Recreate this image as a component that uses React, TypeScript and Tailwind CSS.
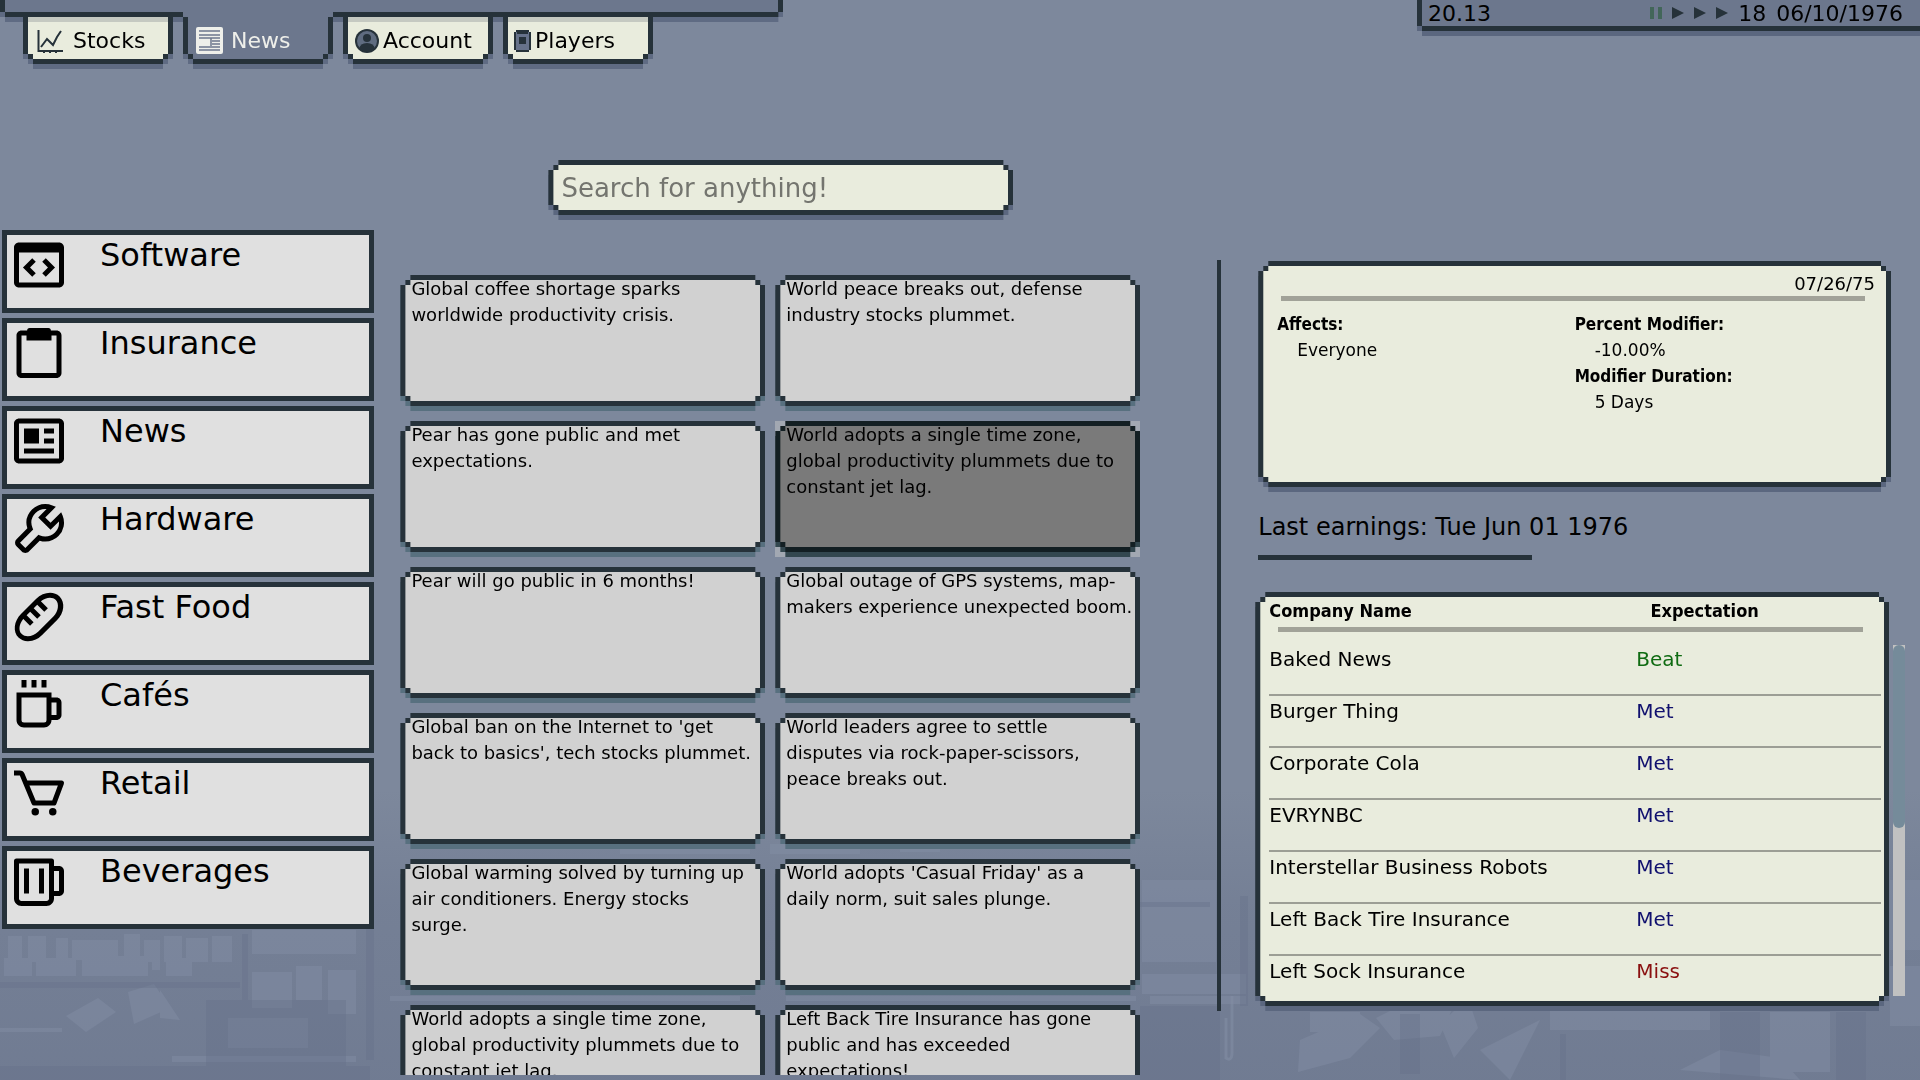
import React, { useState } from 'react';
import { BiBaguette, BiBeer, BiCart, BiClipboard, BiCodeBlock, BiCoffee, BiNews, BiWrench } from 'react-icons/bi';

// Stepped 5px corners, for the dark outline and the fill inside it
const OUTLINE =
  '[clip-path:polygon(10px_0,calc(100%_-_10px)_0,calc(100%_-_10px)_5px,calc(100%_-_5px)_5px,calc(100%_-_5px)_10px,100%_10px,100%_calc(100%_-_10px),calc(100%_-_5px)_calc(100%_-_10px),calc(100%_-_5px)_calc(100%_-_5px),calc(100%_-_10px)_calc(100%_-_5px),calc(100%_-_10px)_100%,10px_100%,10px_calc(100%_-_5px),5px_calc(100%_-_5px),5px_calc(100%_-_10px),0_calc(100%_-_10px),0_10px,5px_10px,5px_5px,10px_5px)]';
const FILL =
  '[clip-path:polygon(5px_0,calc(100%_-_5px)_0,calc(100%_-_5px)_5px,100%_5px,100%_calc(100%_-_5px),calc(100%_-_5px)_calc(100%_-_5px),calc(100%_-_5px)_100%,5px_100%,5px_calc(100%_-_5px),0_calc(100%_-_5px),0_5px,5px_5px)]';
const TAB_OUTLINE =
  '[clip-path:polygon(0_0,100%_0,100%_calc(100%_-_10px),calc(100%_-_5px)_calc(100%_-_10px),calc(100%_-_5px)_calc(100%_-_5px),calc(100%_-_10px)_calc(100%_-_5px),calc(100%_-_10px)_100%,10px_100%,10px_calc(100%_-_5px),5px_calc(100%_-_5px),5px_calc(100%_-_10px),0_calc(100%_-_10px))]';
const TAB_FILL =
  '[clip-path:polygon(0_0,100%_0,100%_calc(100%_-_5px),calc(100%_-_5px)_calc(100%_-_5px),calc(100%_-_5px)_100%,5px_100%,5px_calc(100%_-_5px),0_calc(100%_-_5px))]';
const BAR_OUTLINE =
  '[clip-path:polygon(0_0,100%_0,100%_calc(100%_-_5px),calc(100%_-_5px)_calc(100%_-_5px),calc(100%_-_5px)_100%,5px_100%,5px_calc(100%_-_5px),0_calc(100%_-_5px))]';

const StocksIcon = () => (
  <svg width="26" height="24" viewBox="0 0 26 24" fill="none" stroke="#26323a" strokeWidth="2">
    <path d="M1.5 1V22H26M7 22v2M13 22v2M19 22v2" />
    <path d="M4 18L10 10L16 16L20 8L24 2" />
  </svg>
);

const NewsIcon = () => (
  <svg width="27" height="27" viewBox="0 0 27 27">
    <rect width="27" height="27" rx="2" fill="#eeefea" />
    <path d="M3 4H24M3 8H24M3 11H24M3 20H24M3 23H24M16 14H24M16 17H24M15 11V19" stroke="#6c778d" strokeWidth="1.5" />
  </svg>
);

const AccountIcon = () => (
  <svg width="24" height="24" viewBox="0 0 24 24">
    <circle cx="12" cy="12" r="12" fill="#26323a" />
    <circle cx="12" cy="12" r="10" fill="#5f6c80" />
    <circle cx="12" cy="9" r="4" fill="#26323a" />
    <path d="M4 20Q5 14 12 14T20 20Q16 23 12 23T4 20Z" fill="#26323a" />
  </svg>
);

const PlayersIcon = () => (
  <svg width="17" height="24" viewBox="0 0 17 24">
    <path d="M2 1H15V3H17V21H15V23H2V21H0V3H2Z" fill="#26323a" />
    <path d="M2 3H15V21H2Z" fill="#66728a" />
    <path d="M3 3H14V5H3ZM5 8H12V15H5Z" fill="#26323a" />
  </svg>
);

const tabs = [
  { name: 'Stocks', icon: StocksIcon, spacing: 'pl-[9px] gap-2.5' },
  { name: 'News', icon: NewsIcon, spacing: 'pl-2 gap-2' },
  { name: 'Account', icon: AccountIcon, spacing: 'pl-[7px] gap-1' },
  { name: 'Players', icon: PlayersIcon, spacing: 'pl-1.5 gap-1' },
];

const categories = [
  { name: 'Software', icon: BiCodeBlock },
  { name: 'Insurance', icon: BiClipboard },
  { name: 'News', icon: BiNews },
  { name: 'Hardware', icon: BiWrench },
  { name: 'Fast Food', icon: BiBaguette },
  { name: 'Cafés', icon: BiCoffee },
  { name: 'Retail', icon: BiCart },
  { name: 'Beverages', icon: BiBeer },
];

const headlines = [
  'Global coffee shortage sparks worldwide productivity crisis.',
  'World peace breaks out, defense industry stocks plummet.',
  'Pear has gone public and met expectations.',
  'World adopts a single time zone, global productivity plummets due to constant jet lag.',
  'Pear will go public in 6 months!',
  'Global outage of GPS systems, map-makers experience unexpected boom.',
  "Global ban on the Internet to 'get back to basics', tech stocks plummet.",
  'World leaders agree to settle\ndisputes via rock-paper-scissors,\npeace breaks out.',
  'Global warming solved by turning up air conditioners. Energy stocks\nsurge.',
  "World adopts 'Casual Friday' as a\ndaily norm, suit sales plunge.",
  'World adopts a single time zone, global productivity plummets due to constant jet lag.',
  'Left Back Tire Insurance has gone public and has exceeded expectations!',
];

const earnings = [
  { company: 'Baked News', result: 'Beat' },
  { company: 'Burger Thing', result: 'Met' },
  { company: 'Corporate Cola', result: 'Met' },
  { company: 'EVRYNBC', result: 'Met' },
  { company: 'Interstellar Business Robots', result: 'Met' },
  { company: 'Left Back Tire Insurance', result: 'Met' },
  { company: 'Left Sock Insurance', result: 'Miss' },
];

const resultColor: Record<string, string> = {
  Beat: 'text-[#0f6b12]',
  Met: 'text-[#10106e]',
  Miss: 'text-[#8a1010]',
};

interface PanelProps {
  children: React.ReactNode;
  className?: string;
}

const Panel: React.FC<PanelProps> = ({ children, className = '' }) => (
  <div className={`flex drop-shadow-[0_5px_0_#5b677f] ${className}`}>
    <div className={`flex w-full bg-[#26323a] p-[5px] ${OUTLINE}`}>
      <div className={`w-full bg-[#e9ecdd] ${FILL}`}>{children}</div>
    </div>
  </div>
);

// Faded office behind everything
const Backdrop = () => (
  <svg
    className="absolute inset-x-0 bottom-0 -z-10 h-[290px] w-full"
    viewBox="0 0 1920 290"
    preserveAspectRatio="none"
    aria-hidden="true"
  >
    <defs>
      <linearGradient id="dusk" x1="0" y1="0" x2="0" y2="1">
        <stop offset="0" stopColor="#6f7a91" stopOpacity="0" />
        <stop offset="0.4" stopColor="#6f7a91" stopOpacity="0.6" />
        <stop offset="1" stopColor="#6f7a91" stopOpacity="0.9" />
      </linearGradient>
    </defs>
    <rect width="1920" height="290" fill="url(#dusk)" />
    <g fill="#828da4" opacity="0.5">
      <path d="M8 146h14v26H8zM28 146h18v26H28zM56 148h12v24H56zM72 150h46v20H72zM124 144h16v28h-16zM144 150h16v22h-16zM164 146h18v26h-18zM186 148h22v24h-22zM212 146h20v26h-20z" />
      <path d="M4 168h28v18H4zM36 168h40v18H36zM82 166h66v20H82zM152 168h8v12h-8zM166 168h26v18h-26z" />
      <path d="M252 140h104v24H252zM252 182h40v36h-40zM296 176h26v34h-26zM328 180h28v44h-28zM228 228h80v30h-80z" />
      <path d="M66 226l32-18 18 14-30 20zM128 202l26-8 16 24-36 16zM160 200l20 30-20-2zM172 266h184v6H172zM0 238h62v4H0z" />
      <path d="M620 52h130v12H620zM770 54h90v10h-90zM900 52h40v10h-40zM390 206h350v5H390zM786 206h350v5H786z" />
      <path d="M1142 90h74v82h-74zM1142 184h104v20h-104zM1150 206h96v8h-96z" />
      <path d="M1300 250l60-26 20 14-30 30-52 14zM1376 228l40-20 44-6-20 44-46 4zM1440 234l28-26 10 30-24 30zM1480 260l60-30-30 60zM1680 280l40-20 60 8 20 22z" />
      <path d="M1550 220h160v20h-160zM1770 222h60v60h-60zM1890 90h30v70h-30zM1890 176h30v60h-30z" />
      <path d="M1310 222h50v20h-50z" />
    </g>
    <g fill="#66718a" opacity="0.4">
      <path d="M0 192h240v6H0zM242 144h6v76h-6zM206 210h140v66H206zM366 110h8v160h-8zM0 276h370v14H0z" />
      <path d="M1140 112h70v5h-70zM1140 216h80v74h-80zM1240 106h8v110h-8zM1400 224h20v60h-20zM1560 244h6v46h-6zM1720 222h40v68h-40zM1836 222h30v68h-30z" />
    </g>
    <path d="M1232 206v56q0 10-6 6v-40" fill="none" stroke="#828da4" strokeWidth="3" opacity="0.6" />
  </svg>
);

const TopNav = () => {
  const [active, setActive] = useState('News');

  return (
    <nav className="w-[40.8%] drop-shadow-[0_5px_0_#5f6b83]">
      <div className={`h-[17px] bg-[#26323a] px-[5px] pb-[5px] ${BAR_OUTLINE}`}>
        <div className="h-full bg-[#6c778d]" />
      </div>
      {/* relative keeps the open tab above the bar's bottom line */}
      <div className="relative -mt-[5px] flex gap-2.5 pl-[23px]">
        {tabs.map(({ name, icon: Icon, spacing }) => {
          const on = name === active;
          return (
            <div key={name} className="w-[150px]">
              <div className={`h-[5px] ${on ? 'bg-[#6c778d]' : ''}`} />
              <button
                onClick={() => setActive(name)}
                className={`flex h-[47px] w-full bg-[#26323a] px-[5px] pb-[5px] ${TAB_OUTLINE}`}
              >
                <span
                  className={`flex w-full items-center border-t-[5px] text-[22px] ${spacing} ${TAB_FILL} ${
                    on ? 'border-[#6c778d] bg-[#6c778d] text-[#eeefea]' : 'border-[#c5c9c1] bg-[#e9ecdd]'
                  }`}
                >
                  <Icon />
                  {name}
                </span>
              </button>
            </div>
          );
        })}
      </div>
    </nav>
  );
};

const StatusBar = () => (
  <div className="w-[26.2%] drop-shadow-[0_5px_0_#5b677f]">
    <div className="bg-[#26323a] pb-[5px] pl-[5px] [clip-path:polygon(0_0,100%_0,100%_100%,5px_100%,5px_calc(100%_-_5px),0_calc(100%_-_5px))]">
      <div className="flex h-[26px] items-center bg-[#6c778d] pl-1.5 pr-[17px] text-[22px]">
        <span>20.13</span>
        <div className="ml-auto flex gap-2.5 pr-2.5">
          <button aria-label="Pause">
            <svg width="12" height="12" viewBox="0 0 12 12" fill="#426659"><path d="M0 0h4v12H0zM8 0h4v12H8z" /></svg>
          </button>
          {['Play', 'Fast', 'Fastest'].map((speed) => (
            <button key={speed} aria-label={speed}>
              <svg width="12" height="12" viewBox="0 0 12 12" fill="#26323a"><path d="M0 0L12 6L0 12Z" /></svg>
            </button>
          ))}
        </div>
        <span className="mr-2.5">18</span>
        <span>06/10/1976</span>
      </div>
    </div>
  </div>
);

export default function App() {
  const [selected, setSelected] = useState(3);

  return (
    <div className="relative isolate flex h-screen flex-col overflow-hidden bg-[#7d889c] font-['DejaVu_Sans',sans-serif] text-black">
      <Backdrop />

      <header className="flex h-16 shrink-0 items-start justify-between">
        <TopNav />
        <StatusBar />
      </header>

      <main className="flex min-h-0 flex-1">
        {/* Industry list */}
        <aside className="flex w-[19.5%] flex-col gap-[5px] pl-0.5 pt-[166px]">
          {categories.map(({ name, icon: Icon }) => (
            <button
              key={name}
              className="flex h-[83px] shrink-0 items-start gap-[31px] border-[5px] border-[#26323a] bg-[#e0e0e0] pl-0.5 text-left text-[32px] leading-10"
            >
              <Icon className="size-[60px]" />
              {name}
            </button>
          ))}
        </aside>

        {/* Headlines */}
        <section className="flex min-w-0 flex-1 flex-col pb-[5px] pl-[26px] pr-[77px] pt-24">
          <Panel className="ml-[148px] w-[465px] shrink-0">
            <input
              type="text"
              aria-label="Search for anything!"
              placeholder="Search for anything!"
              className="h-[45px] w-full px-2 text-[26px] outline-none placeholder:text-[#74756f]"
            />
          </Panel>
          <div className="mt-[60px] grid min-h-0 flex-1 auto-rows-[136px] grid-cols-2 gap-2.5 overflow-hidden">
            {headlines.map((text, i) => {
              const on = i === selected;
              return (
                <button
                  key={i}
                  onClick={() => setSelected(i)}
                  className={`flex pb-[5px] text-left ${on ? 'bg-[#a2a8b2]' : ''}`}
                >
                  <span className={`flex h-full w-full ${on ? 'drop-shadow-[0_5px_0_#33474f]' : 'drop-shadow-[0_5px_0_#58707f]'}`}>
                    <span className={`flex w-full p-[5px] ${OUTLINE} ${on ? 'bg-[#131f23]' : 'bg-[#26323a]'}`}>
                      <span className={`w-full ${FILL} ${on ? 'bg-[#7a7a7a]' : 'bg-[#d1d1d1]'}`}>
                        <span className="-mt-1 block whitespace-pre-line pl-1.5 text-[18px] leading-[26px]">{text}</span>
                      </span>
                    </span>
                  </span>
                </button>
              );
            })}
          </div>
        </section>

        {/* Event details and earnings */}
        <section className="flex w-[36.6%] pb-[69px] pt-[196px]">
          <div className="w-1 shrink-0 bg-[#26323a]" />
          <div className="flex min-w-0 flex-1 flex-col pl-[37px] pt-px">
            <Panel className="mr-[29px] h-[226px] shrink-0">
              <div className="pt-1.5">
                <p className="pr-[11px] text-right text-[18px] leading-6">07/26/75</p>
                <div className="ml-[18px] mr-[21px] h-[5px] bg-[#a1a298]" />
                <div className="grid grid-cols-2 pt-2.5 text-[17px] leading-[26px]">
                  <dl className="pl-3.5">
                    <dt className="font-['DejaVu_Sans_Condensed','DejaVu_Sans',sans-serif] font-bold">Affects:</dt>
                    <dd className="pl-5">Everyone</dd>
                  </dl>
                  <dl>
                    <dt className="font-['DejaVu_Sans_Condensed','DejaVu_Sans',sans-serif] font-bold">Percent Modifier:</dt>
                    <dd className="pl-5">-10.00%</dd>
                    <dt className="font-['DejaVu_Sans_Condensed','DejaVu_Sans',sans-serif] font-bold">Modifier Duration:</dt>
                    <dd className="pl-5">5 Days</dd>
                  </dl>
                </div>
              </div>
            </Panel>

            <h2 className="mt-6 text-[24px] leading-8">Last earnings: Tue Jun 01 1976</h2>
            <div className="mt-3 h-[5px] w-[274px] shrink-0 bg-[#26323a]" />

            <div className="-ml-[3px] mt-8 flex min-h-0 flex-1 pb-[5px]">
              <Panel className="min-w-0 flex-1">
                <table className="w-full table-fixed text-left text-[20px] leading-[30px]">
                  <thead className="font-['DejaVu_Sans_Condensed','DejaVu_Sans',sans-serif] text-[18px] leading-[27px]">
                    <tr>
                      <th className="w-[60%] pl-[9px] font-bold">Company Name</th>
                      <th className="pl-4 font-bold">Expectation</th>
                    </tr>
                    <tr>
                      <td colSpan={2} className="pb-3 pl-[18px] pr-[21px]">
                        <div className="mt-[3px] h-[5px] bg-[#a1a298]" />
                      </td>
                    </tr>
                  </thead>
                  <tbody>
                    {earnings.map(({ company, result }, i) => (
                      <tr key={company}>
                        <td colSpan={2} className="pl-[9px] pr-[3px]">
                          <div className={`flex h-[52px] ${i < earnings.length - 1 ? 'border-b-2 border-[#9c9e95]' : ''}`}>
                            <span className="w-[60%]">{company}</span>
                            <span className={resultColor[result]}>{result}</span>
                          </div>
                        </td>
                      </tr>
                    ))}
                  </tbody>
                </table>
              </Panel>
              <div className="mb-2.5 ml-1 mr-[15px] mt-[53px] w-3 bg-[#c1c1c1]">
                <div className="h-[52%] rounded-full bg-[#758b9a]" />
              </div>
            </div>
          </div>
        </section>
      </main>
    </div>
  );
}
